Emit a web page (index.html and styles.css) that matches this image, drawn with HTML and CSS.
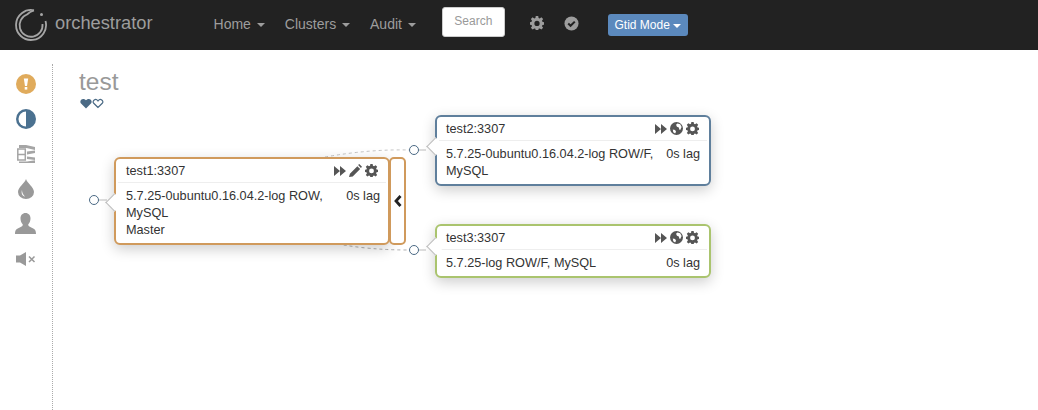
FILE: index.html
```html
<!DOCTYPE html>
<html lang="en">
   <head>
      <meta charset="UTF-8">
      <meta name="viewport" content="width=device-width, initial-scale=1.0">
      <title>orchestrator</title>
      <link rel="stylesheet" href="styles.css">
   </head>
   <body>
      <nav class="navbar">
         <a class="brand">
            <svg class="logo" width="34" height="34" viewBox="0 0 34 34">
               <path d="M20 2.300A15 15 0 1 0 31.500 13" fill="none" stroke="#a5a5a5" stroke-width="1.800"/>
               <path d="M20 2.300Q16 3.500 13 6.500A11.500 11.500 0 1 0 28.500 16" fill="none" stroke="#a5a5a5" stroke-width="1.800"/>
               <circle cx="27.500" cy="6.500" r="1.500" fill="#a5a5a5"/>
            </svg>
            <span>orchestrator</span>
         </a>
         <ul class="menu">
            <li>Home <i class="caret"></i></li>
            <li>Clusters <i class="caret"></i></li>
            <li>Audit <i class="caret"></i></li>
         </ul>
         <div class="search">Search</div>
         <svg class="nav-icon gear-nav" width="14" height="14" viewBox="0 0 16 16"><use href="#gear"/></svg>
         <svg class="nav-icon check-nav" width="15" height="15" viewBox="0 0 16 16">
            <circle cx="8" cy="8" r="7.500" fill="#9d9d9d"/>
            <path d="M4.500 8l2.500 2.500 4.500-4.500" fill="none" stroke="#222" stroke-width="2.200"/>
         </svg>
         <button class="mode-btn">Gtid Mode <i class="caret white"></i></button>
      </nav>

      <svg class="defs" width="0" height="0">
         <symbol id="gear" viewBox="0 0 16 16">
            <path fill-rule="evenodd" d="M6.600 0h2.800l.4 2.200 1.300.6L13 1.500l2 2-1.300 1.900.5 1.300 2.200.4v2.800l-2.200.4-.5 1.300 1.300 1.900-2 2-1.900-1.300-1.300.5-.4 2.200H6.600l-.4-2.200-1.300-.5L3 15.500l-2-2 1.300-1.900-.5-1.300L-.4 9.900V7.100l2.200-.4.500-1.300L1 3.500l2-2 1.900 1.300 1.300-.6zM8 5.500a3 3 0 1 0 0 6 3 3 0 0 0 0-6z"/>
         </symbol>
         <symbol id="forward" viewBox="0 0 12 12">
            <path d="M0 1l6 5-6 5zM6 1l6 5-6 5z"/>
         </symbol>
         <symbol id="globe" viewBox="0 0 14 14">
            <circle cx="7" cy="7" r="7"/>
            <path fill="#fff" d="M8 1.500l3 1 1.500 3-1.500 3-1-.5-.5-2-2-1-1-2zM3 8l2.500.5 1 2-1 2L3.500 11z"/>
         </symbol>
         <symbol id="pencil" viewBox="0 0 14 14">
            <path d="M0 14l1-3.500 8-8 3 3-8 8zM9.800 1.200L11 0l3 3-1.200 1.200z"/>
         </symbol>
      </svg>

      <div class="page">
         <aside class="sidebar">
            <div class="side-item">
               <svg width="20" height="20" viewBox="0 0 20 20">
                  <circle cx="10" cy="10" r="10" fill="#e0ab5c"/>
                  <path d="M7.800 4.500h4.400L11 12H9z" fill="#fff"/>
                  <rect x="8.700" y="13" width="2.600" height="2.600" fill="#fff"/>
               </svg>
            </div>
            <div class="side-item">
               <svg width="20" height="20" viewBox="0 0 20 20">
                  <circle cx="10" cy="10" r="10" fill="#4b7190"/>
                  <path d="M10 2.500a7.500 7.500 0 0 0 0 15z" fill="#fff"/>
               </svg>
            </div>
            <div class="side-item">
               <svg width="20" height="20" viewBox="0 0 20 20">
                  <path d="M1.800 5h7.500v11H1.800zM1.800 10.500h7.500" fill="none" stroke="#a5a5a5" stroke-width="1.500"/>
                  <path d="M3 1h7l9 2v3L10.500 4H3zM11 7.500l8-1v2.500l-8 1.500zM11 12.500l8 1V16l-8-1zM3 17.500h8l8-1.200V19H3z" fill="#a5a5a5"/>
               </svg>
            </div>
            <div class="side-item">
               <svg width="16" height="20" viewBox="0 0 16 20">
                  <path d="M8 0c1 4 8 8 8 13a8 7 0 0 1-16 0C0 8 7 4 8 0z" fill="#999"/>
                  <path d="M4 11c-1 3 0 6 3 6.500-2-2-3-4-3-6.500z" fill="#fff"/>
               </svg>
            </div>
            <div class="side-item">
               <svg width="21" height="21" viewBox="0 0 21 21">
                  <path d="M10.500 0c3 0 5 2.300 5 5.500 0 2.500-1 4.500-2.300 6 0 1.500 1 2 3 3 3 1.200 4.800 2 4.800 6.500H0c0-4.500 1.800-5.300 4.800-6.500 2-1 3-1.500 3-3-1.300-1.500-2.300-3.500-2.300-6C5.500 2.300 7.500 0 10.500 0z" fill="#999"/>
               </svg>
            </div>
            <div class="side-item">
               <svg width="20" height="14" viewBox="0 0 20 14">
                  <path d="M0 3.500h4l6-3.500v14l-6-3.500H0z" fill="#999"/>
                  <path d="M13 4.500l5.500 5.500M18.500 4.500L13 10" stroke="#999" stroke-width="1.500"/>
               </svg>
            </div>
         </aside>

         <main class="content">
            <h1 class="title">test</h1>
            <div class="hearts">
               <svg width="12" height="11" viewBox="0 0 12 11"><path d="M6 10.500L.8 5.200C-1 2.500 2.800-1 6 2.300 9.200-1 13 2.500 11.200 5.200z" fill="#4b6a85"/></svg>
               <svg width="12" height="11" viewBox="0 0 12 11"><path d="M6 9.500L1.500 5C0 3 3.500-.5 6 3c2.500-3.500 6 0 4.500 2z" fill="#fff" stroke="#4b6a85" stroke-width="1.200"/></svg>
            </div>

            <div class="diagram">
               <svg class="links" width="1038" height="360">
                  <path d="M325 107Q370 99 409 100" fill="none" stroke="#c4c4c4" stroke-dasharray="3 3"/>
                  <path d="M338 194Q370 200 409 200" fill="none" stroke="#b0b0b0" stroke-dasharray="3 3"/>
                  <path d="M98 150h9M418 100h8M418 200h8" stroke="#bbb"/>
               </svg>
               <span class="port port-a"></span>
               <span class="port port-b"></span>
               <span class="port port-c"></span>

               <div class="node node-master">
                  <div class="node-head">
                     <span>test1:3307</span>
                     <div class="node-icons">
                        <svg width="12" height="12"><use href="#forward"/></svg>
                        <svg width="13" height="13"><use href="#pencil"/></svg>
                        <svg width="13" height="13"><use href="#gear"/></svg>
                     </div>
                  </div>
                  <div class="node-body">
                     <div class="node-row"><span>5.7.25-0ubuntu0.16.04.2-log ROW,<br>MySQL</span><span>0s lag</span></div>
                     <div>Master</div>
                  </div>
               </div>
               <div class="toggle">
                  <svg width="8" height="12" viewBox="0 0 8 12"><path d="M6.500 1L2 6l4.500 5" fill="none" stroke="#222" stroke-width="2.800"/></svg>
               </div>

               <div class="node node-replica">
                  <div class="node-head">
                     <span>test2:3307</span>
                     <div class="node-icons">
                        <svg width="12" height="12"><use href="#forward"/></svg>
                        <svg width="13" height="13"><use href="#globe"/></svg>
                        <svg width="13" height="13"><use href="#gear"/></svg>
                     </div>
                  </div>
                  <div class="node-body">
                     <div class="node-row"><span>5.7.25-0ubuntu0.16.04.2-log ROW/F,<br>MySQL</span><span>0s lag</span></div>
                  </div>
               </div>

               <div class="node node-ok">
                  <div class="node-head">
                     <span>test3:3307</span>
                     <div class="node-icons">
                        <svg width="12" height="12"><use href="#forward"/></svg>
                        <svg width="13" height="13"><use href="#globe"/></svg>
                        <svg width="13" height="13"><use href="#gear"/></svg>
                     </div>
                  </div>
                  <div class="node-body">
                     <div class="node-row"><span>5.7.25-log ROW/F, MySQL</span><span>0s lag</span></div>
                  </div>
               </div>
            </div>
         </main>
      </div>
   </body>
</html>
```

FILE: styles.css
```css
html, body{
margin: 0;
height: 100%;
overflow: hidden;
}
body{
font-family: "Liberation Sans", Arial, sans-serif;
font-size: 13px;
color: #333;
background-color: #fff;
}
.defs{
position: absolute;
}
.navbar{
height: 50px;
background-color: #222;
display: flex;
align-items: center;
color: #9d9d9d;
}
.brand{
display: flex;
align-items: center;
margin-left: 14px;
font-size: 18.3px;
}
.brand span{
margin-left: 7px;
margin-top: -4px;
}
.menu{
list-style: none;
display: flex;
gap: 20px;
margin: -2px 0 0 61px;
padding: 0;
font-size: 14px;
}
.caret{
display: inline-block;
width: 0;
height: 0;
margin-left: 2px;
vertical-align: middle;
border-top: 4px solid #9d9d9d;
border-left: 4px solid transparent;
border-right: 4px solid transparent;
}
.caret.white{
border-top-color: #fff;
margin-left: 0;
}
.search{
width: 61px;
height: 28px;
margin-left: 26px;
margin-top: -6px;
line-height: 27px;
background-color: #fff;
border: 1px solid #ccc;
border-radius: 3px;
text-align: center;
font-size: 12px;
color: #999;
}
.nav-icon{
fill: #9d9d9d;
margin-top: -4px;
}
.gear-nav{
margin-left: 25px;
}
.check-nav{
margin-left: 20px;
}
.mode-btn{
margin-left: 29px;
height: 22px;
width: 80px;
padding: 0;
border: none;
border-radius: 3px;
background-color: #5b89bd;
color: #fff;
font-family: inherit;
font-size: 12px;
}
.page{
display: flex;
height: 360px;
}
.sidebar{
width: 53px;
flex: none;
margin-top: 14px;
padding-top: 2px;
padding-right: 1px;
box-sizing: border-box;
border-right: 1px dotted #aaa;
}
.side-item{
height: 35px;
display: flex;
align-items: center;
justify-content: center;
}
.content{
flex: 1;
position: relative;
padding-left: 26px;
}
.title{
margin: 19px 0 0;
font-size: 24.5px;
font-weight: normal;
line-height: 26px;
color: #999;
}
.hearts{
display: flex;
margin: 3px 0 0 1px;
}
.diagram{
position: absolute;
top: 0;
left: -53px;
width: 1038px;
height: 360px;
}
.links{
position: absolute;
top: 0;
left: 0;
}
.port{
position: absolute;
width: 8px;
height: 8px;
border: 1.500px solid #4b6a85;
border-radius: 50%;
background-color: #fff;
}
.port-a{
left: 89px;
top: 145px;
}
.port-b{
left: 409px;
top: 95px;
}
.port-c{
left: 409px;
top: 195px;
}
.node{
position: absolute;
width: 276px;
box-sizing: border-box;
background-color: #fff;
border: 2px solid #ccc;
border-radius: 6px;
box-shadow: 0 4px 14px rgba(0, 0, 0, 0.2);
}
.node::before{
content: "";
position: absolute;
left: -8px;
width: 12px;
height: 12px;
transform: rotate(45deg);
background-color: #fff;
border-left: 1px solid #bbb;
border-bottom: 1px solid #bbb;
}
.node-master{
left: 114px;
top: 107px;
height: 88px;
border-color: #d09a5c;
}
.node-master::before{
top: 37px;
}
.node-replica{
left: 435px;
top: 65px;
height: 71px;
border-color: #5f7f9c;
}
.node-replica::before{
top: 23px;
}
.node-ok{
left: 435px;
top: 174px;
height: 54px;
border-color: #aac46e;
}
.node-ok::before{
top: 14px;
}
.node-head{
display: flex;
justify-content: space-between;
align-items: center;
height: 23px;
margin: 0 2px;
padding: 0 8px;
border-bottom: 1px solid #eee;
color: #333;
}
.node-icons{
display: flex;
align-items: center;
gap: 3px;
fill: #555;
}
.node-body{
padding: 5px 8px 0 10px;
line-height: 17px;
font-size: 12.7px;
position: relative;
}
.node-head span{
font-size: 12.7px;
}
.node-replica .node-head, .node-ok .node-head{
padding: 0 8px 0 7px;
}
.node-replica .node-body, .node-ok .node-body{
padding: 5px 9px 0 9px;
}
.node-row{
display: flex;
justify-content: space-between;
}
.toggle{
position: absolute;
left: 389px;
top: 107px;
width: 17px;
height: 88px;
box-sizing: border-box;
border: 2px solid #d09a5c;
border-radius: 5px;
display: flex;
align-items: center;
justify-content: center;
background-color: #fff;
}
```
